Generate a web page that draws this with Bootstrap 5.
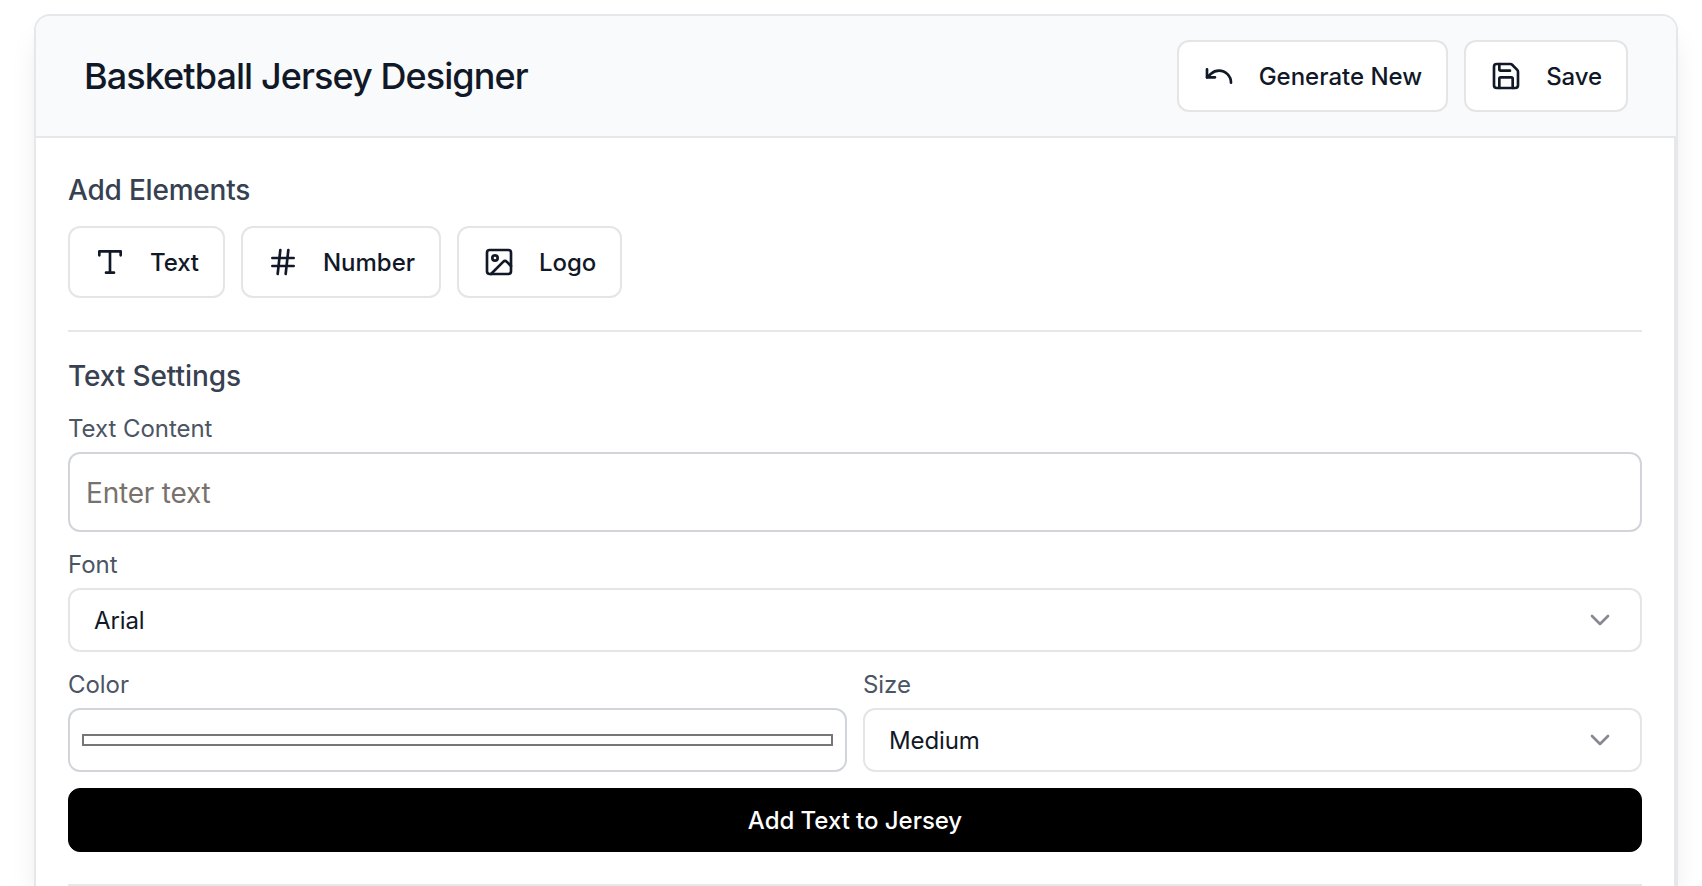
<!DOCTYPE html>
<html lang="en">
<head>
<meta charset="utf-8">
<meta name="viewport" content="width=device-width, initial-scale=1">
<title>Basketball Jersey Designer</title>
<link rel="stylesheet" href="https://cdn.jsdelivr.net/npm/bootstrap@5.3.0/dist/css/bootstrap.min.css">
<style>
  body { font-family: Inter, "Liberation Sans", sans-serif; color: #111827; padding-top: 14px; height: 886px; overflow: hidden; }
  .designer { margin: 0 24px 0 34px; height: 872px; border: 2px solid #e5e7eb; border-bottom: 0; border-radius: 16px 16px 0 0; overflow: hidden;
    box-shadow: 0 20px 30px -6px rgba(0,0,0,.1), 0 8px 12px -8px rgba(0,0,0,.1); }
  .designer-head { height: 122px; flex: none; padding: 0 48px; background: #f9fafb; border-bottom: 2px solid #e5e7eb; }
  .designer-head h1 { font-size: 36px; font-weight: 500; line-height: 56px; letter-spacing: -.92px; }
  .panel { flex: 1; min-height: 0; padding: 32px 32px 0; border-right: 2px solid #e5e7eb; }
  .panel h2 { font-size: 28px; font-weight: 500; line-height: 40px; letter-spacing: -.2px; margin: 0 0 16px; color: #374151; }
  .panel h2.settings-title { letter-spacing: -.1px; }
  .rule { border-bottom: 2px solid #e5e7eb; padding-bottom: 32px; }
  .tool { --bs-btn-color: #111827; --bs-btn-bg: #fff; --bs-btn-border-color: #e5e5e5; --bs-btn-border-width: 2px;
    --bs-btn-padding-x: 24px; --bs-btn-padding-y: 0; --bs-btn-font-size: 24px; --bs-btn-font-weight: 500; --bs-btn-border-radius: 12px;
    height: 72px; display: inline-flex; align-items: center; gap: 24px; line-height: 32px; letter-spacing: -.1px; white-space: nowrap; }
  .tool span, .box span { padding-top: 2px; }
  .tool svg { width: 32px; height: 32px; flex: none; }
  .tool.wide { letter-spacing: 0; }
  svg { fill: none; stroke: currentColor; stroke-width: 2; stroke-linecap: round; stroke-linejoin: round; }
  .field-name { display: block; font-size: 24px; line-height: 34px; letter-spacing: -.05px; margin-bottom: 6px; color: #4b5563; }
  .box { height: 64px; border: 2px solid #e5e5e5; border-radius: 12px; font-size: 24px; letter-spacing: -.1px; padding: 0 24px; background: #fff; }
  .box svg { width: 32px; height: 32px; opacity: .5; }
  .entry.form-control { height: 80px; border: 2px solid #d1d5db; border-radius: 12px; font-size: 28px; letter-spacing: -.2px; padding: 2px 16px 0; }
  .entry::placeholder { color: #78716c; opacity: 1; }
  .swatch-box { border-color: #d1d5db; padding: 0 12px; }
  .swatch { height: 12px; border: 2px solid #767676; }
  .add { --bs-btn-color: #fff; --bs-btn-bg: #000; --bs-btn-border-color: #000; --bs-btn-font-size: 24px; --bs-btn-font-weight: 500;
    --bs-btn-border-radius: 12px; --bs-btn-padding-y: 0; height: 64px; padding-top: 2px; letter-spacing: -.04px; }
</style>
</head>
<body>
<main class="designer d-flex flex-column">
  <header class="designer-head d-flex align-items-center justify-content-between">
    <h1 class="mb-0">Basketball Jersey Designer</h1>
    <div class="d-flex gap-3">
      <button class="btn tool wide"><svg viewBox="0 0 24 24"><path d="M3 7v6h6"/><path d="M21 17a9 9 0 0 0-9-9 9 9 0 0 0-6 2.3L3 13"/></svg><span>Generate New</span></button>
      <button class="btn tool"><svg viewBox="0 0 24 24"><path d="M15.2 3a2 2 0 0 1 1.4.6l3.8 3.8a2 2 0 0 1 .6 1.4V19a2 2 0 0 1-2 2H5a2 2 0 0 1-2-2V5a2 2 0 0 1 2-2z"/><path d="M17 21v-7a1 1 0 0 0-1-1H8a1 1 0 0 0-1 1v7"/><path d="M7 3v4a1 1 0 0 0 1 1h7"/></svg><span>Save</span></button>
    </div>
  </header>
  <div class="panel">
    <section class="rule">
      <h2>Add Elements</h2>
      <div class="d-flex gap-3">
        <button class="btn tool"><svg viewBox="0 0 24 24"><path d="M4 7V4h16v3M9 20h6M12 4v16"/></svg><span>Text</span></button>
        <button class="btn tool wide"><svg viewBox="0 0 24 24"><path d="M4 9h16M4 15h16M10 3 8 21M16 3l-2 18"/></svg><span>Number</span></button>
        <button class="btn tool"><svg viewBox="0 0 24 24"><rect x="3" y="3" width="18" height="18" rx="2"/><circle cx="9" cy="9" r="2"/><path d="m21 15-3.086-3.086a2 2 0 0 0-2.828 0L6 21"/></svg><span>Logo</span></button>
      </div>
    </section>
    <section class="rule pt-4">
      <h2 class="settings-title">Text Settings</h2>
      <div class="d-flex flex-column gap-3">
        <div>
          <label class="field-name" for="content">Text Content</label>
          <input id="content" class="form-control entry" type="text" placeholder="Enter text">
        </div>
        <div>
          <span class="field-name">Font</span>
          <div class="box d-flex align-items-center justify-content-between"><span>Arial</span><svg viewBox="0 0 24 24"><path d="m6 9 6 6 6-6"/></svg></div>
        </div>
        <div class="row gx-3">
          <div class="col-6">
            <span class="field-name">Color</span>
            <div class="box swatch-box d-flex align-items-center"><div class="swatch w-100"></div></div>
          </div>
          <div class="col-6">
            <span class="field-name">Size</span>
            <div class="box d-flex align-items-center justify-content-between"><span>Medium</span><svg viewBox="0 0 24 24"><path d="m6 9 6 6 6-6"/></svg></div>
          </div>
        </div>
        <button class="btn add w-100">Add Text to Jersey</button>
      </div>
    </section>
  </div>
</main>
<script src="https://cdn.jsdelivr.net/npm/bootstrap@5.3.0/dist/js/bootstrap.bundle.min.js"></script>
</body>
</html>
